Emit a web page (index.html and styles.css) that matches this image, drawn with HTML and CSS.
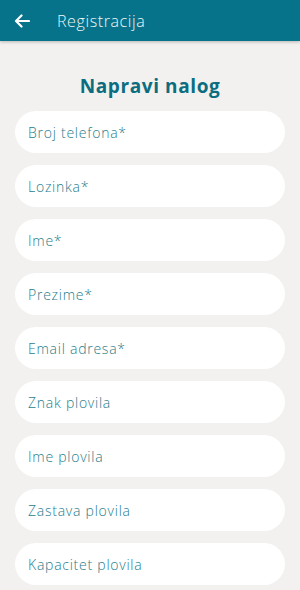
FILE: index.html
```html
<!DOCTYPE html>
<html lang="sr">
<head>
<meta charset="utf-8">
<link rel="stylesheet" href="styles.css">
</head>
<body>
<header class="topbar">
  <svg class="back" width="16" height="14" viewBox="0 0 16 14"><path d="M15 7H2M7.5 1.5 2 7l5.5 5.5" fill="none" stroke="#fff" stroke-width="2.2" stroke-linecap="round" stroke-linejoin="round"/></svg>
  <span class="title">Registracija</span>
</header>
<main class="content">
  <h1 class="heading">Napravi nalog</h1>
  <div class="field">Broj telefona*</div>
  <div class="field">Lozinka*</div>
  <div class="field">Ime*</div>
  <div class="field">Prezime*</div>
  <div class="field">Email adresa*</div>
  <div class="field">Znak plovila</div>
  <div class="field">Ime plovila</div>
  <div class="field">Zastava plovila</div>
  <div class="field">Kapacitet plovila</div>
</main>
</body>
</html>
```
FILE: styles.css
```css
html, body { margin: 0; padding: 0; }
body {
  width: 300px;
  height: 590px;
  overflow: hidden;
  background: #f2f1ef;
  font-family: "Open Sans", "Noto Sans", sans-serif;
}
.topbar {
  height: 41px;
  background: #06738a;
  display: flex;
  align-items: center;
  box-shadow: 0 1px 3px rgba(0,0,0,0.25);
  position: relative;
}
.back { margin-left: 14px; }
.title {
  margin-left: 27px;
  color: #eef6f7;
  font-size: 16px;
  font-weight: 300;
  letter-spacing: 0.6px;
}
.content {
  display: flex;
  flex-direction: column;
  padding: 0 15px;
  gap: 12px;
}
.heading {
  margin: 33px 0 1px;
  text-align: center;
  color: #0c6d80;
  font-size: 19px;
  font-weight: 700;
  letter-spacing: 0.6px;
  line-height: 24px;
}
.field {
  height: 42px;
  border-radius: 21px;
  background: #fff;
  display: flex;
  align-items: center;
  padding-left: 13px;
  color: #1f7d8b;
  font-size: 14px;
  font-weight: 300;
  letter-spacing: 0.75px;
}
```
